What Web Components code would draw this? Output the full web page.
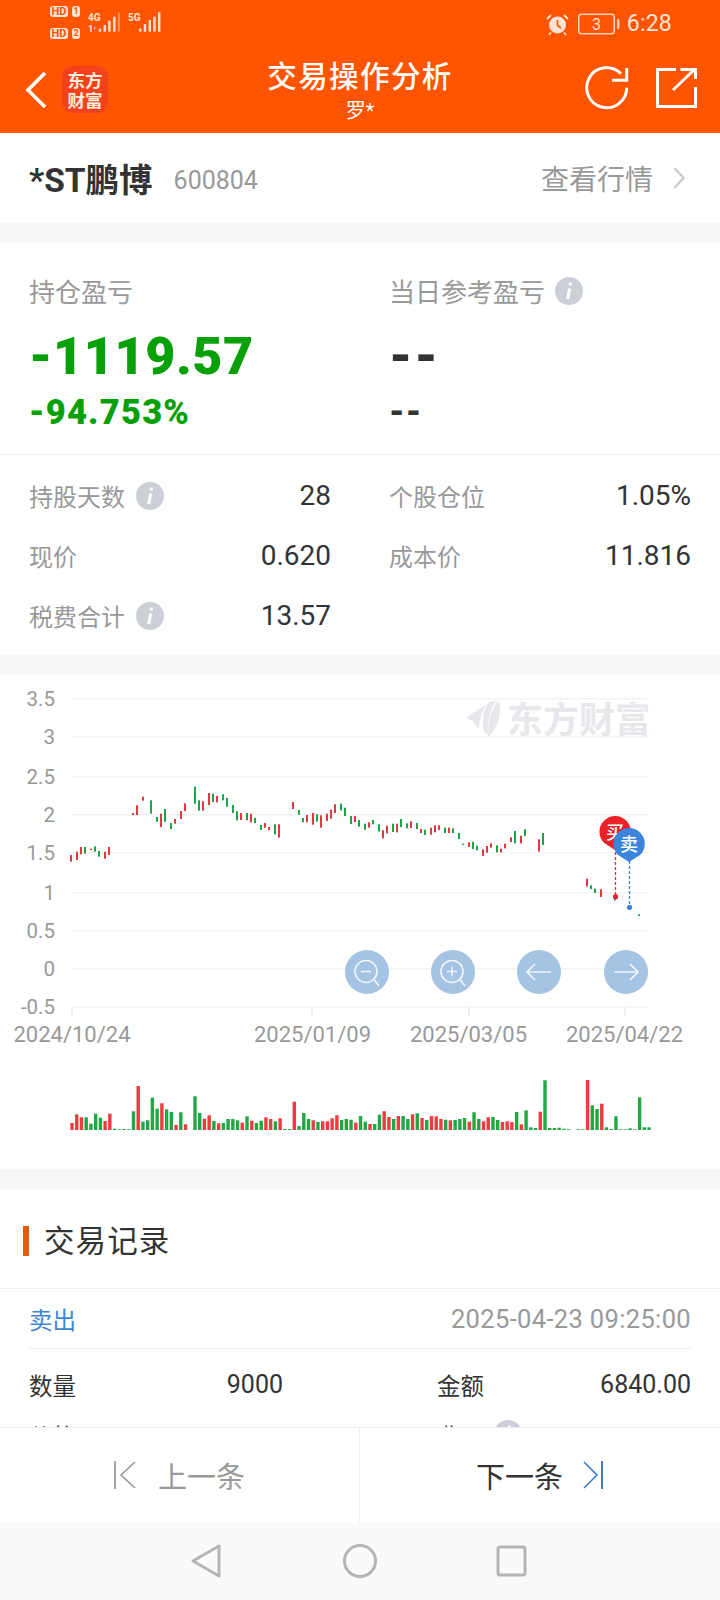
<!DOCTYPE html>
<html lang="zh">
<head>
<meta charset="utf-8">
<title>交易操作分析</title>
<style>
html,body{margin:0;padding:0;background:#f7f7f7}
body{width:720px;height:1600px;overflow:hidden;font-family:Roboto,"Noto Sans CJK SC",sans-serif;color:#333}
app-shell{width:720px;height:1600px}
</style>
</head>
<body>
<app-shell>
  <app-header slot="top"></app-header>
  <stock-bar name="*ST鹏博" code="600804"></stock-bar>
  <pnl-card></pnl-card>
  <kline-chart></kline-chart>
  <trade-records></trade-records>
  <record-pager slot="bottom"></record-pager>
  <nav-bar slot="bottom"></nav-bar>
</app-shell>
<script>
const FONT='Roboto,"Noto Sans CJK SC",sans-serif';
function def(name,html,init){
  customElements.define(name,class extends HTMLElement{
    constructor(){super();const r=this.attachShadow({mode:'open'});r.innerHTML=typeof html==='function'?html(this):html;}
    connectedCallback(){if(init)init(this.shadowRoot,this);}
  });
}

def('app-shell',`<style>
:host{display:flex;flex-direction:column;overflow:hidden}
.scroll{flex:1;min-height:0;overflow:hidden;display:flex;flex-direction:column;gap:20px}
</style>
<slot name="top"></slot><div class="scroll"><slot></slot></div><slot name="bottom"></slot>`);

def('status-bar',`<style>
:host{display:flex;height:50px;justify-content:space-between;color:#ffe3d4;font-family:${FONT}}
.left{display:flex;padding:6px 0 0 50px}
.hds{display:flex;flex-direction:column;gap:11px;width:38px}
.hd{display:flex;gap:4px;height:11px}
.hd b{display:block;background:#ffe3d4;color:#ff5500;border-radius:3px;font:700 11px/11px Roboto,sans-serif;text-align:center}
.hd b:first-child{width:18px}.hd b:last-child{width:8px;font-size:9px}
svg{display:block}
.right{display:flex;align-items:center;height:48px;padding-right:48px}
.time{font:400 23px/30px Roboto,sans-serif;margin-left:6px;letter-spacing:.2px}
</style>
<div class="left">
 <div class="hds"><div class="hd"><b>HD</b><b>1</b></div><div class="hd"><b>HD</b><b>2</b></div></div>
 <svg width="76" height="30" viewBox="88 6 76 30">
  <g fill="#ffe3d4">
   <text x="88" y="20.5" font-size="10" font-weight="700" font-family="Roboto,sans-serif">4G</text>
   <text x="88" y="32" font-size="9" font-weight="700" font-family="Roboto,sans-serif">1</text>
   <path d="M94 26v4l2-2z" opacity=".6"/>
   <text x="128" y="20.5" font-size="10" font-weight="700" font-family="Roboto,sans-serif">5G</text>
   <rect x="98.7" y="28.6" width="2.4" height="3.1"/><rect x="103.6" y="25" width="2.4" height="6.7"/><rect x="108.2" y="20.7" width="2.4" height="11"/><rect x="113.1" y="16.7" width="2.4" height="15"/><rect x="118" y="12.7" width="1.6" height="19" opacity=".55"/>
   <rect x="139" y="28.6" width="2.4" height="3.1"/><rect x="143.8" y="24" width="2.4" height="7.7"/><rect x="148.6" y="20" width="2.4" height="11.7"/><rect x="153.2" y="16.7" width="2.4" height="15"/><rect x="158" y="12.3" width="2.4" height="19.4"/>
  </g>
 </svg>
</div>
<div class="right">
 <svg width="23" height="23" viewBox="0 0 23 23" style="margin-right:9px"><circle cx="11.5" cy="12" r="8.5" fill="#ffe3d4"/><path d="M11.5 7v5.5l3.5 2.5" fill="none" stroke="#ff5500" stroke-width="1.6"/><path d="M1 6l4-4M22 6l-4-4M5 19.5L3 22M18 19.5l2 2.5" stroke="#ffe3d4" stroke-width="1.8" fill="none"/></svg>
 <svg width="43" height="22" viewBox="0 0 43 22"><rect x=".75" y="1.25" width="35.5" height="19.5" rx="3" fill="none" stroke="#ffd2b9" stroke-width="1.5"/><rect x="39" y="6" width="2.4" height="10" rx="1" fill="#ffd2b9"/><text x="18.5" y="17" text-anchor="middle" font-size="16" fill="#ffe3d4" font-family="Roboto,sans-serif">3</text></svg>
 <span class="time">6:28</span>
</div>`);

def('app-header',`<style>
:host{display:block;height:133px;background:#ff5500;color:#fff;font-family:${FONT}}
.bar{display:grid;grid-template-columns:1fr auto 1fr;height:83px}
.l{display:flex;align-items:center;padding:0 0 4px 25px;gap:15px;height:79px}
.logo{width:46px;height:47px;border-radius:11px;background:#f4431c;color:#ffeedd;font:700 17.5px/20px "Noto Sans CJK SC",sans-serif;text-align:center;display:flex;align-items:center;justify-content:center}
.c{text-align:center;padding-top:3px}
.t{font:500 29.5px/42px "Noto Sans CJK SC",sans-serif;letter-spacing:1.4px}
.s{font:400 20px/24px Roboto,"Noto Sans CJK SC",sans-serif;margin-top:4px}
.r{display:flex;justify-content:flex-end;align-items:flex-start;padding:15px 23px 0 0;gap:27px}
svg{display:block}
</style>
<status-bar></status-bar>
<div class="bar">
 <div class="l">
  <svg width="22" height="38" viewBox="0 0 22 38"><path d="M20 2L3 19l17 17" fill="none" stroke="#fff" stroke-width="3.6"/></svg>
  <div class="logo">东方<br>财富</div>
 </div>
 <div class="c"><div class="t">交易操作分析</div><div class="s">罗*</div></div>
 <div class="r">
  <svg width="45" height="45" viewBox="584 66 45 45"><path d="M626.7 88.7A20 20 0 1 1 620.9 74.6" fill="none" stroke="#fff" stroke-width="3"/><path d="M626.7 69v12.2h-14.7" fill="none" stroke="#fff" stroke-width="3"/></svg>
  <svg width="41" height="41" viewBox="657 68 41 41" style="margin-top:2px"><path d="M677 70.5H658.5V107.5H696.5V88" fill="none" stroke="#fff" stroke-width="3"/><path d="M674 91L695 71M681.5 70.5H696.5V80" fill="none" stroke="#fff" stroke-width="3"/></svg>
 </div>
</div>`);

def('stock-bar',h=>`<style>
:host{display:flex;align-items:center;height:90px;background:#fff;padding:0 35px 0 29px;font-family:${FONT};flex:none}
.n{font:700 33.5px/40px Roboto,"Noto Sans CJK SC",sans-serif;color:#333;margin-top:6px}
.c{font:400 25px/40px Roboto,sans-serif;color:#999;margin-left:21px;margin-top:6px}
.v{margin-left:auto;font:400 28px/40px "Noto Sans CJK SC",sans-serif;color:#999}
svg{display:block;margin-left:20px}
</style>
<span class="n">${h.getAttribute('name')}</span><span class="c">${h.getAttribute('code')}</span><span class="v">查看行情</span>
<svg width="12" height="24" viewBox="0 0 12 24"><path d="M1.5 2l9 10-9 10" fill="none" stroke="#ccc" stroke-width="2.4"/></svg>`);

def('info-dot',`<style>:host{display:inline-block;width:28px;height:28px;flex:none}svg{display:block}</style>
<svg width="28" height="28" viewBox="0 0 28 28"><circle cx="14" cy="14" r="14" fill="#ccd0d6"/><path d="M15.6 5.6l-.5 3" stroke="#fff" stroke-width="3" fill="none"/><path d="M14.6 11.5L12.7 22" stroke="#fff" stroke-width="3" fill="none"/></svg>`);

def('stat-cell',h=>`<style>
:host{display:flex;align-items:center;height:60px;font-family:${FONT}}
.l{font:400 24px/36px "Noto Sans CJK SC",sans-serif;color:#999;display:flex;align-items:center;gap:11px}
.v{margin-left:auto;font:400 28px/38px Roboto,sans-serif;color:#333}
</style><span class="l"><slot></slot></span><span class="v">${h.getAttribute('value')||''}</span>`);

def('pnl-card',`<style>
:host{display:block;background:#fff;font-family:${FONT};flex:none}
.top{display:grid;grid-template-columns:360px 1fr;padding:30px 0 22px 29px;border-bottom:1px solid #eee}
.lab{font:400 26px/36px "Noto Sans CJK SC",sans-serif;color:#999;display:flex;align-items:center;gap:10px}
.big{font:900 52px/60px Roboto,sans-serif;letter-spacing:.6px;margin-top:18px;color:#07a007}
.pct{font:900 34.5px/40px Roboto,sans-serif;letter-spacing:1.2px;margin-top:5px;color:#07a007}
.na{color:#333}
.big.na{letter-spacing:2px}
.grid{display:grid;grid-template-columns:302px 302px;column-gap:58px;padding:11px 29px 9px 29px}
</style>
<div class="top">
 <div><div class="lab">持仓盈亏</div><div class="big">-1119.57</div><div class="pct">-94.753%</div></div>
 <div><div class="lab">当日参考盈亏<info-dot></info-dot></div><div class="big na">--</div><div class="pct na">--</div></div>
</div>
<div class="grid">
 <stat-cell value="28">持股天数<info-dot></info-dot></stat-cell><stat-cell value="1.05%">个股仓位</stat-cell>
 <stat-cell value="0.620">现价</stat-cell><stat-cell value="11.816">成本价</stat-cell>
 <stat-cell value="13.57">税费合计<info-dot></info-dot></stat-cell><div></div>
</div>`);

/* chart data, read off the reference: [x, y1, y2, r|g] */
const z3=[[212,522,542,'r'],[230,512,537,'r'],[242,498,520,'r'],[254,498,518,'g'],[272,503,507,'r'],[284,496,512,'g'],[296,510,527,'g'],[314,512,533,'r'],[326,498,522,'r'],
[399,396,402,'r'],[411,373,402,'r'],[429,347,359,'r'],[453,358,398,'g'],[471,408,422,'g'],[483,398,438,'r'],[495,384,422,'g'],[513,426,444,'g'],[525,414,428,'r'],[543,390,414,'r'],[555,367,390,'r'],[585,317,368,'g'],[597,358,389,'g'],[609,361,389,'r'],[627,336,372,'r'],[639,338,363,'g'],[651,345,364,'r'],[669,340,358,'g'],[681,351,377,'g'],[699,372,396,'g'],[711,391,418,'g'],[723,396,417,'r'],[741,396,418,'g'],[753,398,424,'r'],[765,411,426,'g'],[783,432,447,'g'],[795,426,440,'r'],[807,438,447,'r'],[825,430,460,'g'],[837,430,470,'r'],
[879,363,384,'r'],[897,387,401,'g'],[909,411,424,'g'],[921,402,424,'r'],[939,396,431,'r'],[951,400,422,'g'],[963,403,440,'r'],[981,398,420,'r'],[993,386,413,'r'],[1005,370,396,'r'],[1023,368,388,'g'],[1035,380,405,'g'],[1053,405,429,'g'],[1065,405,423,'r'],[1077,417,437,'g']];
const z4=[[14,428,446,'g'],[26,424,440,'r'],[38,417,430,'g'],[56,430,452,'g'],[68,448,472,'r'],[80,434,457,'r'],[98,428,453,'g'],[110,428,454,'r'],[122,414,438,'g'],[140,427,442,'g'],[152,421,441,'r'],[170,426,444,'g'],[182,444,456,'r'],[194,446,462,'g'],[212,440,461,'r'],[224,433,454,'r'],[236,433,447,'r'],[254,440,456,'g'],[266,440,456,'r'],[278,442,456,'g'],[296,456,474,'g'],[308,488,492,'g'],[326,484,498,'r'],[338,482,504,'g'],[350,494,508,'g'],[368,505,525,'r'],[380,495,515,'r'],[392,487,500,'r'],[410,493,514,'g'],[422,503,514,'r'],[434,488,502,'r'],[452,469,483,'r'],[464,450,487,'g'],[482,464,487,'r'],[494,445,465,'g'],[536,475,512,'r'],[548,456,492,'g']];
const z5=[[680,233,256,'r'],[692,253,264,'g'],[704,263,276,'g'],[722,265,288,'r'],[764,290,298,'g'],[836,340,345,'g']];
const vol1=[[186,'r'],[160,'r'],[169,'r'],[169,'g'],[188,'g'],[158,'g'],[170,'g'],[180,'r'],[158,'r'],[203,'g'],[205,'g'],[204,'g'],[205,'g'],[151,'g'],[75,'r'],[182,'g'],[178,'g'],[110,'g'],[143,'g'],[127,'r'],[145,'g'],[153,'g'],[192,'r'],[154,'g'],[190,'r'],[207,'g'],[106,'g'],[156,'g'],[173,'r'],[163,'r'],[180,'g'],[187,'r'],[186,'g'],[174,'g'],[174,'g'],[178,'g'],[185,'r'],[166,'g'],[179,'r'],[186,'g'],[179,'g'],[169,'r'],[174,'r'],[181,'g'],[172,'r'],[204,'g'],[204,'g'],[122,'r'],[195,'g'],[156,'g'],[174,'g'],[178,'r'],[183,'g'],[181,'r'],[181,'r'],[172,'r'],[163,'r'],[177,'g'],[174,'g'],[176,'g'],[185,'r'],[165,'g']];
const vol2=[[182,'g'],[189,'r'],[189,'g'],[161,'g'],[151,'r'],[168,'r'],[174,'g'],[165,'r'],[165,'g'],[174,'g'],[160,'r'],[157,'g'],[171,'r'],[177,'g'],[165,'r'],[166,'r'],[174,'r'],[176,'g'],[178,'r'],[177,'g'],[174,'g'],[171,'g'],[182,'r'],[154,'g'],[174,'g'],[181,'r'],[169,'r'],[168,'g'],[177,'g'],[183,'r'],[181,'r'],[183,'r'],[153,'g'],[190,'r'],[148,'g'],[199,'g'],[201,'g'],[152,'r'],[58,'g'],[201,'g'],[201,'g'],[200,'g'],[203,'g'],[205,'g'],[207,'g'],[205,'g'],[205,'g'],[57,'r'],[133,'g'],[144,'g'],[128,'r'],[199,'g'],[204,'g'],[166,'g'],[205,'g'],[205,'g'],[202,'g'],[205,'g'],[109,'g'],[199,'g'],[199,'g']];

def('kline-chart',()=>{
 const C={r:'#e2383f',g:'#1ba548'},V={r:'#ee3b40',g:'#1fa843'};
 let s='';
 const grid=[697.7,735.7,775.7,813.7,851.7,891.7,929.7,967.7,1006];
 const labs=['3.5','3','2.5','2','1.5','1','0.5','0','-0.5'];
 grid.forEach((y,i)=>{s+=`<rect x="72" y="${y-.75}" width="576" height="1.5" fill="#f2f2f2"/>`;
   s+=`<text x="55" y="${y+7}" text-anchor="end" class="ax">${labs[i]}</text>`;});
 [72,312,468.7,624.7].forEach(x=>s+=`<rect x="${x-.75}" y="1006" width="1.5" height="10" fill="#ececec"/>`);
 [['2024/10/24',72],['2025/01/09',312.5],['2025/03/05',468.5],['2025/04/22',624.5]].forEach(d=>s+=`<text x="${d[1]}" y="1041" text-anchor="middle" class="dt">${d[0]}</text>`);
 // watermark
 s+=`<g fill="#e8e8ec"><path d="M466 716.5l20-13c-4 8-7 16-7 25l-6-8z"/><path d="M489 701c3-1 6-1 7-1-3 4-7 13-8 24-1 6 1 10 2 12l-6-5c-3-13 0-23 5-30z"/><path d="M498 700c2 2 3 9 1 17-2 9-7 15-10 19-2-8 0-19 3-25 2-5 4-9 6-11z"/></g>
 <g clip-path="url(#wm)"><text x="507" y="732" class="wm">东方财富</text></g>`;
 const cand=(a,ox,oy)=>a.forEach(c=>{const x=Math.round(ox+c[0]/3-1);s+=`<rect x="${x}" y="${(oy+c[1]/3).toFixed(1)}" width="2" height="${((c[2]-c[1])/3).toFixed(1)}" fill="${C[c[3]]}"/>`;});
 cand(z3,0,680);cand(z4,360,680);cand(z5,360,800);
 const base=1129;
 vol1.concat(vol2).forEach((v,i)=>{const x=72+4.73*i-1.7;const top=1060+v[0]/3;const h=base-top;if(h<.4)return;
   s+=`<rect x="${x.toFixed(2)}" y="${top.toFixed(1)}" width="3.4" height="${h.toFixed(1)}" fill="${V[v[1]]}"/>`;});
 // buy/sell pins
 s+=`<path d="M615.5 846V894" stroke="#d8333a" stroke-width="1.3" stroke-dasharray="3 2" fill="none"/><circle cx="615.5" cy="895.7" r="2.6" fill="#e2262c"/>
 <path d="M629.5 860V904" stroke="#3a84d8" stroke-width="1.3" stroke-dasharray="3 2" fill="none"/><circle cx="629.5" cy="906.3" r="2.6" fill="#3a84d8"/>
 <path d="M604.3 842A15.7 15.7 0 1 1 626 842L615 849z" fill="#ea2127"/>
 <text x="615" y="838" text-anchor="middle" class="pin">买</text>
 <path d="M618.2 854A15.7 15.7 0 1 1 640 854L629 861z" fill="#3a84dc"/>
 <text x="629" y="850" text-anchor="middle" class="pin">卖</text>`;
 // control buttons
 const st='fill="none" stroke="#fff" stroke-opacity=".85" stroke-width="1.6"';
 const lens=(cx,plus)=>`<circle cx="${cx}" cy="971" r="22" fill="#a5c3e3"/><circle cx="${cx-1}" cy="970.5" r="11" ${st}/><path d="M${cx+7} 978.5L${cx+12} 985M${cx-6} 970.5H${cx+4}${plus?`M${cx-1} 965.5V975.5`:''}" ${st}/>`;
 s+=lens(367,false)+lens(453,true);
 s+=`<circle cx="539" cy="971" r="22" fill="#a5c3e3"/><path d="M527 971H551M535 963L527 971L535 979" ${st}/>`;
 s+=`<circle cx="626" cy="971" r="22" fill="#a5c3e3"/><path d="M614 971H638M630 963L638 971L630 979" ${st}/>`;
 return `<style>
 :host{display:block;background:#fff;height:494px;flex:none}
 svg{display:block}
 .ax{font:400 20.5px Roboto,sans-serif;fill:#999}
 .dt{font:400 22px Roboto,sans-serif;fill:#999}
 .wm{font:700 36px "Noto Sans CJK SC",sans-serif;fill:#e8e8ec}
 .pin{font:500 18px "Noto Sans CJK SC",sans-serif;fill:#fff}
 </style><svg width="720" height="494" viewBox="0 674 720 494">
 <defs><clipPath id="wm"><rect x="0" y="674" width="648" height="494"/></clipPath></defs>${s}</svg>`;
});

def('trade-records',`<style>
:host{display:block;background:#fff;font-family:${FONT};flex:none}
.head{display:flex;align-items:center;height:99px;border-bottom:1px solid #eee;padding-left:23px}
.mark{width:6px;height:30px;background:#e25a0f;margin-top:4px}
.h{font:400 30.5px/40px "Noto Sans CJK SC",sans-serif;color:#333;margin-left:15px;letter-spacing:1.1px}
.sub{display:flex;align-items:center;justify-content:space-between;height:59px;margin:0 29px 0 29px;border-bottom:1px solid #eee}
.sell{font:400 23.5px/36px "Noto Sans CJK SC",sans-serif;color:#3d85d4}
.time{font:400 25.5px/36px Roboto,sans-serif;color:#999;letter-spacing:.35px}
.rows{display:grid;grid-template-columns:254px 254px;column-gap:154px;padding:0 29px}
.kv{display:flex;align-items:center;height:26px;gap:10px}
.kv.first{height:72px}
.k{font:400 23.5px/36px "Noto Sans CJK SC",sans-serif;color:#333}
.kv:not(.first) .k{padding-top:4px}
.v{margin-left:auto;font:400 25px/36px Roboto,sans-serif;color:#333}
</style>
<div class="head"><span class="mark"></span><span class="h">交易记录</span></div>
<div class="sub"><span class="sell">卖出</span><span class="time">2025-04-23 09:25:00</span></div>
<div class="rows">
 <div class="kv first"><span class="k">数量</span><span class="v">9000</span></div>
 <div class="kv first"><span class="k">金额</span><span class="v">6840.00</span></div>
 <div class="kv"><span class="k">价格</span></div>
 <div class="kv"><span class="k">费用</span><info-dot></info-dot></div>
</div>`);

def('record-pager',`<style>
:host{display:grid;grid-template-columns:360px 360px;height:94px;background:#fff;border-top:1px solid #eee;font-family:${FONT};flex:none;position:relative;z-index:1}
.b{display:flex;align-items:center;justify-content:center;font:400 29px/40px "Noto Sans CJK SC",sans-serif}
.p{color:#999;border-right:1px solid #eee;gap:22px}
.n{color:#333;gap:19px}
svg{display:block}
</style>
<div class="b p"><svg width="22" height="28" viewBox="0 0 22 28"><path d="M1 0V28" stroke="#999" stroke-width="1.8"/><path d="M21 1L7 14l14 13" fill="none" stroke="#999" stroke-width="1.6"/></svg><span>上一条</span></div>
<div class="b n"><span>下一条</span><svg width="22" height="28" viewBox="0 0 22 28"><path d="M2 1l13 13L2 27" fill="none" stroke="#3b7cc4" stroke-width="1.6"/><path d="M20 0V28" stroke="#2f6eb5" stroke-width="1.8"/></svg></div>`);

def('nav-bar',`<style>
:host{display:flex;align-items:center;justify-content:center;height:78px;background:#fafafa;flex:none}
svg{display:block}
</style>
<svg width="720" height="78" viewBox="0 1522 720 78" fill="none" stroke="#b5b5b5" stroke-width="3" stroke-linejoin="round"><path d="M219 1546V1576L193 1561Z"/><circle cx="360" cy="1561" r="15.5"/><rect x="498" y="1547" width="27" height="28" rx="2"/></svg>`);
</script>
</body>
</html>
